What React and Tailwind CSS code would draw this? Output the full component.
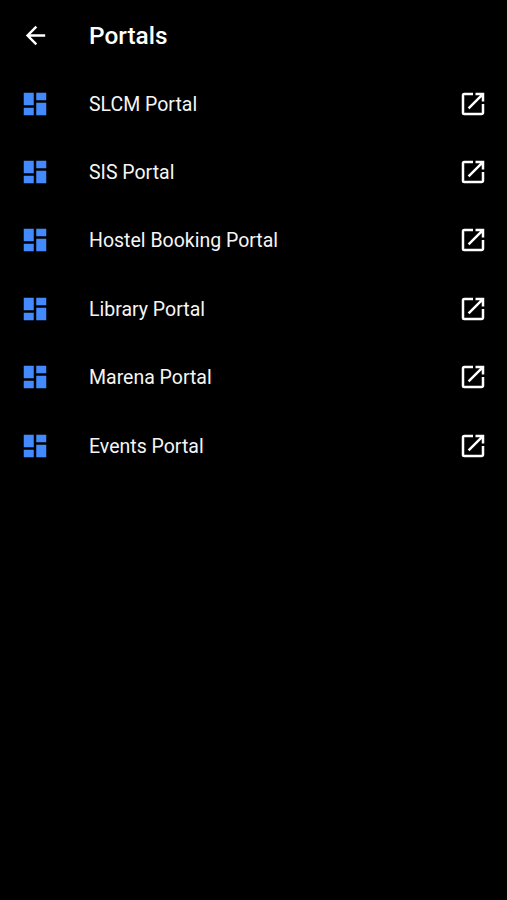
import React from "react";
import { MdArrowBack, MdDashboard, MdOpenInNew } from "react-icons/md";

const portals = [
  "SLCM Portal",
  "SIS Portal",
  "Hostel Booking Portal",
  "Library Portal",
  "Marena Portal",
  "Events Portal",
];

function PortalRow({ name }) {
  return (
    <li>
      <button
        type="button"
        className="flex h-[68.4px] w-full items-center pl-5 pr-[19px] text-left"
      >
        <MdDashboard className="size-[30px] shrink-0 text-[#448aff]" />
        <span className="ml-[39px] flex-1 pt-px text-[19.5px] text-[#f5f5f5]">
          {name}
        </span>
        <MdOpenInNew className="size-[30px] shrink-0" />
      </button>
    </li>
  );
}

export default function App() {
  return (
    <div className="min-h-screen bg-black font-['Roboto',sans-serif] text-white">
      <header className="flex h-[69.5px] items-center pl-[21px]">
        <button type="button" aria-label="Back" className="pt-px">
          <MdArrowBack className="size-[29px]" />
        </button>
        <h1 className="ml-[39px] pt-[3px] text-[24.4px] font-medium">
          Portals
        </h1>
      </header>
      <ul>
        {portals.map((name) => (
          <PortalRow key={name} name={name} />
        ))}
      </ul>
    </div>
  );
}
